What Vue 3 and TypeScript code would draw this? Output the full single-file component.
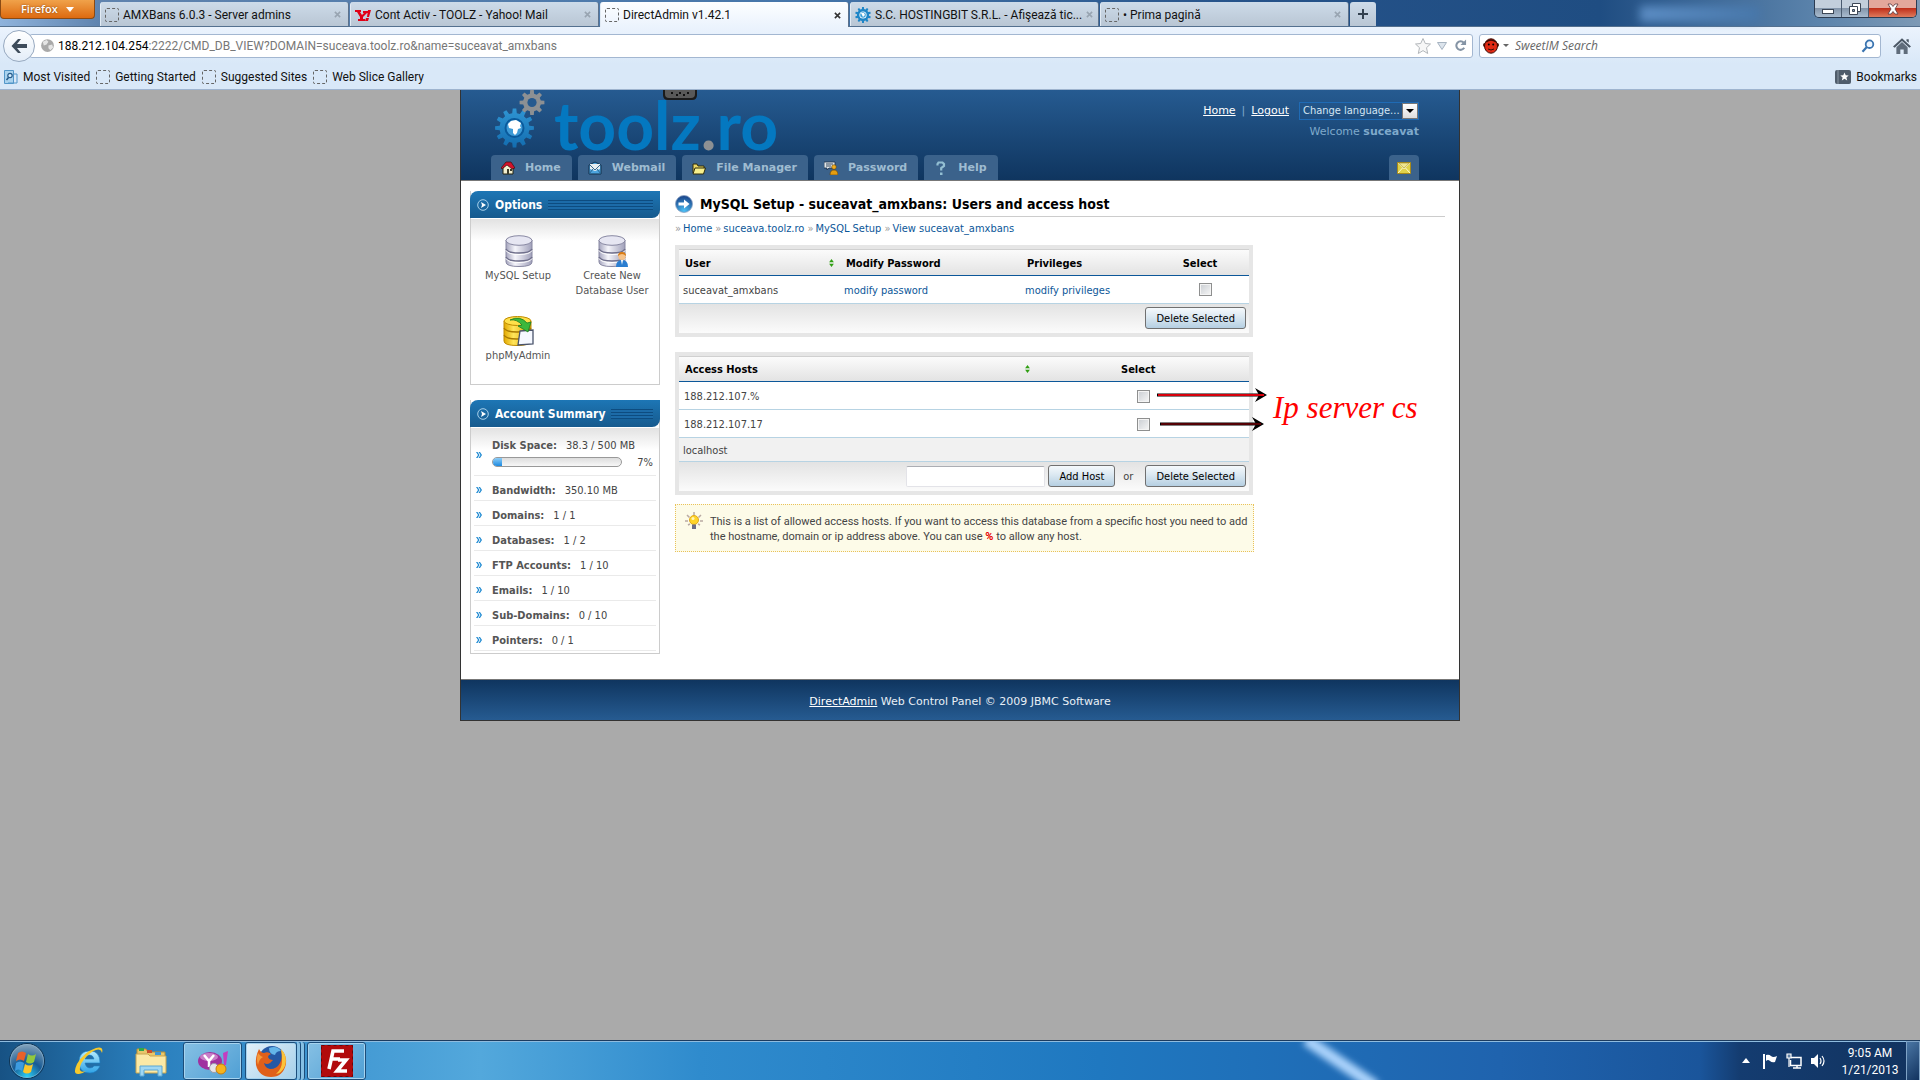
<script setup lang="ts">
import { ref } from 'vue'

interface Tab { title: string; icon: 'blank' | 'yahoo' | 'gear'; active?: boolean }

const tabs: Tab[] = [
  { title: 'AMXBans 6.0.3 - Server admins', icon: 'blank' },
  { title: 'Cont Activ - TOOLZ - Yahoo! Mail', icon: 'yahoo' },
  { title: 'DirectAdmin v1.42.1', icon: 'blank', active: true },
  { title: 'S.C. HOSTINGBIT S.R.L. - Afişează tic...', icon: 'gear' },
  { title: '• Prima pagină', icon: 'blank' },
]
const bookmarks = ['Getting Started', 'Suggested Sites', 'Web Slice Gallery']
const stats = [
  { label: 'Bandwidth:', value: '350.10 MB' },
  { label: 'Domains:', value: '1 / 1' },
  { label: 'Databases:', value: '1 / 2' },
  { label: 'FTP Accounts:', value: '1 / 10' },
  { label: 'Emails:', value: '1 / 10' },
  { label: 'Sub-Domains:', value: '0 / 10' },
  { label: 'Pointers:', value: '0 / 1' },
]
const crumbs = ['Home', 'suceava.toolz.ro', 'MySQL Setup', 'View suceavat_amxbans']
const hosts = ['188.212.107.%', '188.212.107.17']
const diskPercent = 7
const search = ref('')
const newHost = ref('')

function gear(cx: number, cy: number, outer: number, inner: number, teeth: number): string {
  const pts: string[] = []
  const step = (Math.PI * 2) / teeth
  for (let i = 0; i < teeth; i++) {
    const a = i * step - Math.PI / 2
    const corners: [number, number][] = [[-0.3, inner], [-0.18, outer], [0.18, outer], [0.3, inner]]
    for (const [t, r] of corners) {
      pts.push(`${(cx + Math.cos(a + t * step) * r).toFixed(1)} ${(cy + Math.sin(a + t * step) * r).toFixed(1)}`)
    }
  }
  return `M${pts.join('L')}Z`
}
</script>

<template>
  <div class="screen">
    <header class="chrome">
      <div class="titlebar">
        <button class="firefox-btn" type="button">Firefox <span class="tri"></span></button>
        <div class="tabs">
          <div v-for="t in tabs" :key="t.title" class="tab" :class="{ active: t.active }">
            <span v-if="t.icon === 'blank'" class="blank"></span>
            <svg v-else-if="t.icon === 'yahoo'" class="fav" viewBox="0 0 16 16">
              <path d="M0 3h6v2H5l2 3 2-2H8V4h5v2h-1L8 10v2h2v2H3v-2h2v-2L2 5H0z" fill="#e00016" />
              <path d="M13 3h3l-2 7h-2zM11 11h3l-1 3h-3z" fill="#e00016" />
            </svg>
            <svg v-else class="fav" viewBox="0 0 16 16">
              <path :d="gear(8, 8, 8, 6, 10)" fill="#1f86c7" />
              <circle cx="8" cy="8" r="3.6" fill="#fff" /><circle cx="8" cy="8" r="2.8" fill="#3ba0da" />
              <path d="M6 6h3l1 2-2 2z" fill="#fff" />
            </svg>
            <span class="tab-title">{{ t.title }}</span>
            <button class="tab-close" type="button" aria-label="Close tab">
              <svg viewBox="0 0 8 8"><path d="M1 1l6 6M7 1L1 7" stroke="currentColor" stroke-width="1.8" /></svg>
            </button>
          </div>
          <button class="new-tab" type="button" aria-label="New tab">
            <svg viewBox="0 0 12 12"><path d="M6 1v10M1 6h10" stroke="#33414f" stroke-width="2" /></svg>
          </button>
        </div>
        <div class="glow"></div>
        <div class="win-controls">
          <button type="button" aria-label="Minimize"><svg width="14" height="14" viewBox="0 0 14 14"><rect x="1.500" y="7.500" width="11" height="4" fill="#fff" stroke="#3c4756" /></svg></button>
          <button type="button" aria-label="Restore"><svg width="14" height="14" viewBox="0 0 14 14"><path d="M4.500 1.500h8v8h-8z" fill="#fff" stroke="#3c4756" /><path d="M1.500 4.500h8v8h-8z" fill="#fff" stroke="#3c4756" /><path d="M4.500 7.500h2v2h-2z" fill="#8ba0b5" stroke="#3c4756" /></svg></button>
          <button class="close" type="button" aria-label="Close"><svg width="14" height="12" viewBox="0 0 14 12"><path d="M2 1h3l2 2.500L9 1h3L9 6l3 5H9L7 8.500 5 11H2l3-5z" fill="#fff" stroke="#5a3a40" stroke-width=".8" /></svg></button>
        </div>
      </div>

      <div class="navbar">
        <button class="back" type="button" aria-label="Back">
          <svg viewBox="0 0 18 18"><path d="M8 2L1.500 9 8 16h3L7 11h10V7H7l4-5z" fill="#3e4c5b" /></svg>
        </button>
        <div class="urlbar">
          <svg class="globe" viewBox="0 0 16 16"><circle cx="8" cy="8" r="6.800" fill="#a9a9a9" /><path d="M3 4l4-2 2 2-2 3-3 1zM9 8l4-1 1 3-3 3-2-2z" fill="#e5e5e5" /></svg>
          <span class="url"><b>188.212.104.254</b>:2222/CMD_DB_VIEW?DOMAIN=suceava.toolz.ro&amp;name=suceavat_amxbans</span>
          <svg class="star" viewBox="0 0 18 18"><path d="M9 1.500l2.300 5 5.200.5-4 3.700 1.200 5.800L9 13.600l-4.700 2.900 1.200-5.800-4-3.700 5.200-.5z" fill="#f7f7f7" stroke="#b3b7bb" /></svg>
          <svg class="drop" viewBox="0 0 10 10"><path d="M.5 1.500h9L5 8.500z" fill="#dce4ec" stroke="#a6b3c1" /></svg>
          <svg class="reload" viewBox="0 0 14 14"><path d="M11 9.500A4.600 4.600 0 1 1 10.500 4" fill="none" stroke="#8594a5" stroke-width="2.200" /><path d="M13 .5v6H7z" fill="#8594a5" /></svg>
        </div>
        <div class="searchbar">
          <svg class="monkey" viewBox="0 0 16 16"><circle cx="2" cy="7" r="2" fill="#4d1209" /><circle cx="14" cy="7" r="2" fill="#4d1209" /><ellipse cx="8" cy="8" rx="6.500" ry="7.200" fill="#e02a14" stroke="#3b0b05" /><path d="M3 4q5-4 10 0" stroke="#3b0b05" stroke-width="1.500" fill="none" /><circle cx="5.800" cy="6.500" r="1" /><circle cx="10.200" cy="6.500" r="1" /><path d="M5 11q3 2 6 0" stroke="#3b0b05" fill="none" /></svg>
          <span class="caret"></span>
          <input v-model="search" type="text" placeholder="SweetIM Search" aria-label="Search" />
          <svg class="loupe" viewBox="0 0 14 14"><circle cx="8.500" cy="5.200" r="3.800" fill="#eef6ff" stroke="#3a74b0" stroke-width="1.800" /><path d="M5.800 8L1.500 12.800" stroke="#3a74b0" stroke-width="2.200" /></svg>
        </div>
        <button class="home" type="button" aria-label="Home">
          <svg viewBox="0 0 16 16"><path d="M8 1L0 8.500l1.500 1L8 3.500l6.500 6 1.500-1z" fill="#4c5866" /><path d="M3 9.200l5-4.700 5 4.700V15H9.500v-4h-3v4H3z" fill="#5f6c7b" /><path d="M12 2h2v3l-2-1.500z" fill="#4c5866" /></svg>
        </button>
      </div>

      <div class="bookmarks">
        <a href="#"><svg class="visited" viewBox="0 0 14 14"><path d="M.5.5h9v13h-9z" fill="#a9d2ee" stroke="#5396c8" /><path d="M10 4h3v9H4" fill="none" stroke="#5396c8" /><circle cx="6" cy="5.500" r="2.200" fill="#d8efff" stroke="#245a8a" stroke-width="1.200" /><path d="M4.500 7.500L2.500 10" stroke="#245a8a" stroke-width="1.500" /></svg>Most Visited</a>
        <a v-for="b in bookmarks" :key="b" href="#"><span class="blank"></span>{{ b }}</a>
        <button class="bm-menu" type="button"><svg viewBox="0 0 16 14"><rect width="16" height="14" rx="2" fill="#4f5c6b" /><path d="M3 0v14" stroke="#8b97a5" /><path d="M9.500 2.500l1.200 2.800 3 .2-2.300 2 .8 3-2.700-1.700L6.800 10.500l.8-3-2.300-2 3-.2z" fill="#fff" /></svg>Bookmarks</button>
      </div>
    </header>

    <main class="viewport">
      <div class="panel">
        <div class="da-head">
          <div class="brand-row">
            <div class="brand">
              <svg class="gears" viewBox="0 0 50 58">
                <defs><linearGradient id="gb" x1="0" y1="0" x2="0" y2="1"><stop offset="0" stop-color="#2f95d3" /><stop offset="1" stop-color="#136db0" /></linearGradient></defs>
                <path :d="gear(19.500, 38, 19.500, 15, 12)" fill="url(#gb)" />
                <circle cx="19.500" cy="38" r="10" fill="#0a5a9c" /><circle cx="19.500" cy="38" r="8" fill="#3d9ad6" />
                <path d="M13 34l3-3 5-1 5 3-1 3 1 2-3 1-1 4-2 2-2-2v-4l-4-1z" fill="#fff" />
                <path :d="gear(37, 12.500, 12.500, 9, 8)" fill="#8d9093" /><circle cx="37" cy="12.500" r="4.600" fill="#265a8f" />
              </svg>
              <span class="wordmark">toolz<i>.</i>ro</span>
            </div>
            <svg class="handle" viewBox="0 0 34 10"><path d="M0 0h34v5q0 5-5 5H5Q0 10 0 5z" fill="#1b1b1b" /><path d="M2 0h30v4q0 4-4 4H6Q2 8 2 4z" fill="#595959" /><path d="M8 3h2M13 5h2M16 3h2M20 5h2M24 3h2" stroke="#111" stroke-width="2" /></svg>
            <div class="user-box">
              <div class="user-links">
                <a href="#">Home</a><span>|</span><a href="#">Logout</a>
                <div class="lang"><select aria-label="Language"><option>Change language...</option></select><span class="lang-arrow"></span></div>
              </div>
              <div class="welcome">Welcome <b>suceavat</b></div>
            </div>
          </div>
          <nav class="da-nav">
            <a href="#"><svg viewBox="0 0 14 14"><path d="M2 7l4-4 6 4v6H2z" fill="#f3efcf" stroke="#221" /><path d="M0 7l5-6h5l4 6-3 1-5-4-5 4z" fill="#d3122a" stroke="#311" stroke-width=".7" /><path d="M6 8h2v5H6zM9 8h2v2H9z" fill="#3b3b2a" /></svg>Home</a>
            <a href="#"><svg viewBox="0 0 14 14"><path d="M1 4l6-3 6 3v9H1z" fill="#4da5df" stroke="#12304d" /><path d="M2 3h10v5L7 10 2 8z" fill="#e9eef0" /><path d="M2 4l5 5 5-5M1 13l4-5M13 13L9 8" fill="none" stroke="#245b86" stroke-width=".9" /></svg>Webmail</a>
            <a href="#"><svg viewBox="0 0 14 14"><path d="M1 12V3h4l1 2h6v3" fill="#ead765" stroke="#302c0a" /><path d="M1 13l2-6h10.500l-2 6z" fill="#f7ef8c" stroke="#302c0a" /></svg>File Manager</a>
            <a href="#"><svg viewBox="0 0 14 14"><path d="M0 1h11v6H5L3 9V7H0z" fill="#e3e8ea" stroke="#1d3049" stroke-width=".8" /><path d="M2 3h7M2 5h5" stroke="#34495e" /><circle cx="10" cy="6" r="2.300" fill="#f2ae1c" stroke="#67430a" stroke-width=".6" /><path d="M6 14q0-5 4-5t4 5z" fill="#e59d10" stroke="#67430a" stroke-width=".6" /></svg>Password</a>
            <a href="#"><svg viewBox="0 0 14 14"><path d="M3.500 4.500V3l1-1.500h4L10 3v2L7.200 7v2.500" fill="none" stroke="#93bfd3" stroke-width="2.200" /><path d="M6 11.500h2.500V14H6z" fill="#93bfd3" /></svg>Help</a>
            <a class="mail" href="#" aria-label="Messages"><svg viewBox="0 0 14 14"><path d="M.5 1.500h13v11H.5z" fill="#e0d24b" stroke="#a98a18" /><path d="M1 2l6 6 6-6M1 12l4.500-5M13 12L8.500 7" fill="none" stroke="#fffbd0" /><path d="M1.500 2h11L7 7.300z" fill="#efe690" stroke="#9b842a" stroke-width=".6" /></svg></a>
          </nav>
        </div>

        <div class="da-body">
          <aside class="side">
            <section class="box options">
              <h2><svg viewBox="0 0 12 12"><circle cx="6" cy="6" r="5.300" fill="none" stroke="#a8d0ea" /><path d="M4 3l5 3-5 3 1-3z" fill="#fff" /></svg>Options<span class="ribs"></span></h2>
              <div class="icons">
                <a href="#">
                  <svg viewBox="0 0 32 32">
                    <defs><linearGradient id="db" x1="0" x2="1"><stop offset="0" stop-color="#a5a5be" /><stop offset=".35" stop-color="#f5f5fb" /><stop offset="1" stop-color="#a0a0ba" /></linearGradient></defs>
                    <path d="M4 5v22q0 4.500 13 4.500T30 27V5z" fill="url(#db)" stroke="#8888a2" /><ellipse cx="17" cy="5.500" rx="13" ry="4.800" fill="#e6e6f2" stroke="#8888a2" />
                    <path d="M4 14q2 4 13 4t13-4M4 22q2 4 13 4t13-4" fill="none" stroke="#6f6f8b" stroke-width="1.500" /><path d="M4 15.500q2 4 13 4t13-4M4 23.500q2 4 13 4t13-4" fill="none" stroke="#fff" />
                  </svg>MySQL Setup</a>
                <a href="#">
                  <svg viewBox="0 0 32 32">
                    <path d="M3 5v22q0 4.500 13 4.500T29 27V5z" fill="url(#db)" stroke="#8888a2" /><ellipse cx="16" cy="5.500" rx="13" ry="4.800" fill="#e6e6f2" stroke="#8888a2" />
                    <path d="M3 14q2 4 13 4t13-4M3 22q2 4 13 4t13-4" fill="none" stroke="#6f6f8b" stroke-width="1.500" /><path d="M3 15.500q2 4 13 4t13-4M3 23.500q2 4 13 4t13-4" fill="none" stroke="#fff" />
                    <path d="M20 32q0-7 6-7t6 7z" fill="#2b7ed0" /><path d="M25 25h2l-1 5z" fill="#fff" /><circle cx="26" cy="21.500" r="3.600" fill="#f6c38a" /><path d="M22 21q0-4 4-4t4 4q-2-2-4-2t-4 2z" fill="#d97b12" />
                  </svg>Create New Database User</a>
                <a href="#">
                  <svg viewBox="0 0 32 32">
                    <defs><linearGradient id="dy" x1="0" x2="1"><stop offset="0" stop-color="#e2a800" /><stop offset=".35" stop-color="#ffe55a" /><stop offset="1" stop-color="#e0a200" /></linearGradient></defs>
                    <path d="M2 6v20q0 4.500 13 4.500T29 26V6z" fill="url(#dy)" stroke="#bf8b00" /><ellipse cx="15.500" cy="6" rx="13.500" ry="4.500" fill="#ffe04a" stroke="#bf8b00" />
                    <path d="M2 13q2 4 13 4t14-4M2 20q2 4 13 4t14-4" fill="none" stroke="#a87900" stroke-width="1.400" />
                    <path d="M18 16l13-1v14l-15 1z" fill="#f5f8ff" stroke="#49536b" stroke-width="1.300" /><path d="M8 5Q18 0 25 8l4-1-3 10-10-6 4-1Q15 4 8 5z" fill="#3cb83c" stroke="#1c7c22" stroke-width=".8" />
                  </svg>phpMyAdmin</a>
              </div>
            </section>
            <section class="box summary">
              <h2><svg viewBox="0 0 12 12"><circle cx="6" cy="6" r="5.300" fill="none" stroke="#a8d0ea" /><path d="M4 3l5 3-5 3 1-3z" fill="#fff" /></svg>Account Summary<span class="ribs"></span></h2>
              <ul>
                <li class="disk">
                  <svg class="bul" viewBox="0 0 6 6"><path d="M0 0h1.500l2 3-2 3H0l2-3zM2.500 0H4l2 3-2 3H2.500l2-3z" fill="#1f8ad2" /></svg>
                  <div class="disk-info">
                    <div><b>Disk Space:</b>38.3 / 500 MB</div>
                    <div class="meter"><div class="bar"><div class="fill" :style="{ width: diskPercent + '%' }"></div></div><span>{{ diskPercent }}%</span></div>
                  </div>
                </li>
                <li v-for="s in stats" :key="s.label">
                  <svg class="bul" viewBox="0 0 6 6"><path d="M0 0h1.500l2 3-2 3H0l2-3zM2.500 0H4l2 3-2 3H2.500l2-3z" fill="#1f8ad2" /></svg>
                  <span><b>{{ s.label }}</b>{{ s.value }}</span>
                </li>
              </ul>
            </section>
          </aside>

          <section class="content">
            <h1><svg viewBox="0 0 18 18"><defs><radialGradient id="ra" cx=".5" cy=".9" r=".9"><stop offset="0" stop-color="#4cc0f5" /><stop offset="1" stop-color="#173f86" /></radialGradient></defs><circle cx="9" cy="9" r="8.500" fill="url(#ra)" stroke="#8ea4c4" stroke-width=".8" /><path d="M3.500 7.500H9V4.500L14.500 9 9 13.500v-3H3.500z" fill="#fff" /></svg>MySQL Setup - suceavat_amxbans: Users and access host</h1>
            <div class="crumbs"><span v-for="c in crumbs" :key="c"><i>»</i><a href="#">{{ c }}</a></span></div>

            <table class="grid users">
              <colgroup><col class="c-user" /><col class="c-mod" /><col class="c-priv" /><col /></colgroup>
              <thead><tr>
                <th><div class="sortable">User<svg viewBox="0 0 6 10"><path d="M0 4l3-4 3 4zM0 6l3 4 3-4z" fill="#2f9e12" /></svg></div></th>
                <th>Modify Password</th><th>Privileges</th><th class="sel">Select</th>
              </tr></thead>
              <tbody><tr>
                <td>suceavat_amxbans</td><td><a href="#">modify password</a></td><td><a href="#">modify privileges</a></td>
                <td class="chk"><input type="checkbox" aria-label="Select suceavat_amxbans" /></td>
              </tr></tbody>
              <tfoot><tr><td colspan="4"><div class="actions"><button type="button">Delete Selected</button></div></td></tr></tfoot>
            </table>

            <div class="hosts-wrap">
              <table class="grid hosts">
                <colgroup><col class="c-host" /><col /></colgroup>
                <thead><tr>
                  <th><div class="sortable">Access Hosts<svg viewBox="0 0 6 10"><path d="M0 4l3-4 3 4zM0 6l3 4 3-4z" fill="#2f9e12" /></svg></div></th>
                  <th class="sel">Select</th>
                </tr></thead>
                <tbody>
                  <tr v-for="h in hosts" :key="h"><td>{{ h }}</td><td class="chk"><input type="checkbox" :aria-label="'Select ' + h" /></td></tr>
                  <tr class="local"><td colspan="2">localhost</td></tr>
                </tbody>
                <tfoot><tr><td colspan="2"><div class="actions">
                  <input v-model="newHost" type="text" aria-label="New host" /><button type="button">Add Host</button><span>or</span><button type="button">Delete Selected</button>
                </div></td></tr></tfoot>
              </table>
              <svg class="arrows" viewBox="0 0 112 44">
                <path d="M0 7h106" stroke="#000" stroke-width="3" /><path d="M98 0l12 7-12 7 4-7z" fill="#000" /><path d="M1 7h106" stroke="#d8000c" stroke-width="2" />
                <path d="M3 36h100" stroke="#000" stroke-width="3" /><path d="M95 29l12 7-12 7 4-7z" fill="#000" /><path d="M4 36h100" stroke="#a80009" stroke-width="1" />
              </svg>
              <div class="annotation">Ip server cs</div>
            </div>

            <div class="note">
              <svg viewBox="0 0 18 18"><path d="M9 0v3M2 3l2.500 2.500M16 3l-2.500 2.500M0 9h3M15 9h3M3 13l2-1M15 13l-2-1" stroke="#b9aaa3" stroke-width="1.500" /><circle cx="9" cy="8" r="4.500" fill="#ffd429" stroke="#e0a91c" /><circle cx="8" cy="6.500" r="1.500" fill="#fff6b8" /><path d="M7 12.500h4V17H7z" fill="#6b6c86" /></svg>
              <p>This is a list of allowed access hosts. If you want to access this database from a specific host you need to add<br />the hostname, domain or ip address above. You can use <b>%</b> to allow any host.</p>
            </div>
          </section>
        </div>

        <footer class="da-foot"><a href="#">DirectAdmin</a> Web Control Panel © 2009 JBMC Software</footer>
      </div>
    </main>

    <footer class="taskbar">
      <div class="streak"></div>
      <button class="orb" type="button" aria-label="Start">
        <svg viewBox="0 0 38 38"><defs><radialGradient id="ob" cx=".5" cy=".95" r=".9"><stop offset="0" stop-color="#29d0f7" /><stop offset=".5" stop-color="#175a94" /><stop offset="1" stop-color="#7f9fb9" /></radialGradient></defs><circle cx="19" cy="19" r="17.500" fill="url(#ob)" stroke="#0e3353" /><circle cx="19" cy="19" r="16.500" fill="none" stroke="#8db8d3" stroke-opacity=".6" />
          <path d="M10 11q4-3 8 0l-2 8q-4-3-8 0z" fill="#e8612a" /><path d="M20 12q4 3 8 0l-2 8q-4 3-8 0z" fill="#92c83e" /><path d="M8 21q4-3 8 0l-2 8q-4-3-7 0z" fill="#3d9be0" /><path d="M17 22q4 3 8 0l-2 8q-4 3-8 0z" fill="#fbc52b" /></svg>
      </button>
      <button class="pin" type="button" aria-label="Internet Explorer">
        <svg viewBox="0 0 32 32"><defs><linearGradient id="ie" x1="0" y1="0" x2="0" y2="1"><stop offset="0" stop-color="#b6ecff" /><stop offset="1" stop-color="#2ea2e6" /></linearGradient></defs><path d="M27 18H12q1 5 5 5 3 0 4-2h6q-3 7-10 7-11 0-11-11T17 6q10 0 10 12zM12 14h9q-1-4-4.500-4T12 14z" fill="url(#ie)" stroke="#1c7fc4" stroke-width=".6" /><path d="M29 8Q31 1 23 3 11 7 4 19q-5 11 2 10 3 0 7-3-5 2-6-1Q6 19 14 11q9-8 13-6 1 0 2 3z" fill="#f7c92c" /></svg>
      </button>
      <button class="pin" type="button" aria-label="Windows Explorer">
        <svg viewBox="0 0 32 32"><path d="M2 4h9l2 3h17v20H2z" fill="#e9c76a" stroke="#b48f35" /><path d="M4 3h5v3H4z" fill="#2ea84a" /><path d="M12 5h5v3h-5z" fill="#c94d2b" /><path d="M20 7h6v3h-6z" fill="#3d95d6" /><path d="M1 9h12l2 2h16v17H1z" fill="#fbe9a6" stroke="#c7a550" /><path d="M5 31V21h22v10h-4v-6H9v6z" fill="#9fd7f3" stroke="#5aa7d4" /></svg>
      </button>
      <button class="task yahoo" type="button" aria-label="Yahoo! Messenger">
        <svg viewBox="0 0 32 32"><ellipse cx="13" cy="16" rx="12" ry="9" fill="#a0319f" /><ellipse cx="12" cy="12" rx="9" ry="4" fill="#d9a0d8" opacity=".7" /><path d="M7 10l5 6 5-6M12 16v6" stroke="#fff" stroke-width="2.500" fill="none" /><path d="M26 8l5-2-2 14h-2z" fill="#c43cc0" /><circle cx="17" cy="23" r="4.500" fill="#e4e4ea" stroke="#9a9aa6" /><circle cx="24" cy="24" r="5" fill="#f6b31d" stroke="#c77d0c" /></svg>
      </button>
      <button class="task fx" type="button" aria-label="Firefox">
        <svg viewBox="0 0 32 32"><circle cx="17" cy="14" r="13" fill="#2458a4" /><path d="M14 3q8-3 12 3-5 0-6 4-6-1-6-7z" fill="#64b5e8" /><path d="M4 4q-4 8-3 16 3 12 15 12t15-13q1-9-5-14 2 8-1 13-3 6-10 6-5-1-6-6 3 2 6 0l3-3q-4 0-5-3 0-2 3-3-3-3-7-1Q6 8 4 4z" fill="#e0601a" /><path d="M26 4q7 7 4 17-3 7-9 8 6-5 6-13 0-7-1-12z" fill="#fbc33a" /><path d="M3 8q-2 6 0 12 1-6 5-8-3-1-5-4z" fill="#f49a3c" /></svg>
      </button>
      <span class="stack"></span><span class="stack"></span>
      <button class="task" type="button" aria-label="FileZilla">
        <svg viewBox="0 0 32 32"><rect width="32" height="32" fill="#b10a0c" /><rect x=".5" y=".5" width="31" height="31" fill="none" stroke="#6d0406" stroke-dasharray="3 3" /><path d="M8 24l4-18h11M10 14h9M17 15h8l-9 11h10" fill="none" stroke="#fff" stroke-width="3.600" /></svg>
      </button>
      <div class="tray">
        <svg class="up" viewBox="0 0 8 5"><path d="M0 5l4-5 4 5z" fill="#fff" /></svg>
        <svg viewBox="0 0 16 16"><path d="M2 1v15" stroke="#fff" stroke-width="2" /><path d="M4 2q3-1 5 1t6 0l-2 6q-3 1-5-1T4 8z" fill="#fff" /></svg>
        <svg viewBox="0 0 16 16"><path d="M5 4.500h10v8H4.500V7M7 15h8M11 12v3" fill="none" stroke="#fff" stroke-width="1.500" /><path d="M1 1h4v4H1zM3 5v9" fill="#5f7fa3" stroke="#fff" stroke-width="1.200" /></svg>
        <svg viewBox="0 0 16 16"><path d="M1 5h3l4-4v14l-4-4H1z" fill="#fff" /><path d="M10 5q2 3 0 6M12 3q4 5 0 10" fill="none" stroke="#fff" stroke-width="1.200" /></svg>
      </div>
      <div class="clock"><span>9:05 AM</span><span>1/21/2013</span></div>
      <button class="show-desktop" type="button" aria-label="Show desktop"></button>
    </footer>
  </div>
</template>

<style>
body { margin: 0; background: #aaa; }
</style>

<style scoped>
* { box-sizing: border-box; }
button { font: inherit; padding: 0; border: 0; background: none; color: inherit; }
svg { display: block; flex: none; }
.screen { display: flex; flex-direction: column; min-height: 100vh; font: 11px/15px "DejaVu Sans Condensed", "DejaVu Sans", sans-serif; color: #444; }

/* browser chrome */
.chrome { font: 12px/16px Roboto, sans-serif; color: #111; background: #d9e8f8; border-bottom: 1px solid #9fb4cf; }
.titlebar { position: relative; display: flex; height: 27px; background: linear-gradient(90deg, #8fb3dc 0, #5f83ae 100px, #4676aa 800px, #255289 1250px, #1f4d82 1600px, #5c84ac 1820px, #7d99b5 100%); border-bottom: 1px solid #54708f; }
.firefox-btn { display: flex; align-items: center; gap: 8px; width: 95px; height: 19px; padding-left: 20px; border: 1px solid #8a4a14; border-top: 0; border-radius: 0 0 4px 4px; background: linear-gradient(#f0a24a, #dd6a10); color: #fff; font: 600 11px/14px "Open Sans", sans-serif; text-shadow: 0 0 2px #7a3b00; }
.tri { border: 4px solid transparent; border-top: 5px solid #fff; border-bottom: 0; }
.tabs { display: flex; gap: 1px; padding-top: 2px; margin-left: 5px; }
.tab { display: flex; align-items: center; gap: 4px; width: 249px; height: 24px; padding: 1px 7px 0 4px; border-right: 1px solid #5d728c; border-left: 1px solid #e2ebf4; border-radius: 3px 3px 0 0; background: linear-gradient(#cddbe9, #b9c6d4); }
.tab.active { height: 25px; background: linear-gradient(#fdfeff, #ebf3fd); }
.tab-title { flex: 1; white-space: nowrap; }
.tab-close { color: #98a4b1; }
.tab-close svg { width: 7px; height: 7px; }
.tab.active .tab-close { color: #333; }
.blank { flex: none; width: 14px; height: 14px; border: 1px dashed #666; border-radius: 2px; }
.fav { width: 16px; height: 16px; }
.new-tab { display: flex; align-items: center; justify-content: center; width: 26px; height: 24px; background: linear-gradient(#cddbe9, #b9c6d4); border-radius: 3px 3px 0 0; }
.new-tab svg { width: 12px; height: 12px; }
.glow { width: 120px; height: 16px; margin: 6px 0 0 auto; background: linear-gradient(90deg, #72a5de, #4678ae); filter: blur(5px); opacity: .7; }
.win-controls { display: flex; height: 18px; margin: 0 3px 0 54px; border: 1px solid #2c3c52; border-top: 0; border-radius: 0 0 5px 5px; overflow: hidden; }
.win-controls button { display: flex; align-items: center; justify-content: center; width: 27px; border-right: 1px solid #4a5b70; background: linear-gradient(#c3cfdc 45%, #8496ab 50%, #a9bccf); }
.win-controls .close { width: 47px; border: 0; background: linear-gradient(#e3a79b 45%, #c0301b 50%, #de7a5c); }
.navbar { display: flex; align-items: center; height: 37px; padding: 0 9px 0 3px; background: linear-gradient(#ebf3fd, #d9e8f8); }
.back { position: relative; z-index: 1; display: flex; align-items: center; justify-content: center; flex: none; width: 32px; height: 32px; border: 1px solid #97a9c0; border-radius: 50%; background: linear-gradient(#fff, #e3edf8); }
.back svg { width: 18px; height: 18px; }
.urlbar, .searchbar { display: flex; align-items: center; height: 24px; border: 1px solid #a3b7d1; border-radius: 3px; background: #fff; }
.urlbar { flex: 1; margin-left: -6px; padding: 0 5px 0 10px; }
.globe { width: 15px; height: 15px; }
.url { flex: 1; margin-left: 3px; color: #777; white-space: nowrap; }
.url b { font-weight: 400; color: #000; }
.star { width: 18px; height: 18px; }
.drop { width: 10px; height: 10px; margin-left: 5px; }
.reload { width: 13px; height: 13px; margin-left: 7px; }
.searchbar { width: 402px; margin-left: 6px; padding: 0 5px 0 3px; }
.monkey { width: 16px; height: 16px; }
.caret { margin-left: 4px; border: 3px solid transparent; border-top-color: #666; border-bottom: 0; }
.searchbar input { flex: 1; min-width: 0; margin-left: 6px; padding: 0; border: 0; outline: 0; background: none; font: italic 12px/16px "Open Sans", sans-serif; }
.searchbar input::placeholder { color: #666; opacity: 1; }
.loupe { width: 14px; height: 14px; }
.home { margin-left: 12px; }
.home svg { width: 18px; height: 18px; }
.bookmarks { display: flex; align-items: center; gap: 6px; height: 25px; padding: 0 3px 0 4px; }
.bookmarks a, .bm-menu { display: flex; align-items: center; gap: 5px; color: #111; text-decoration: none; white-space: nowrap; }
.visited { width: 14px; height: 14px; }
.bm-menu { margin-left: auto; }
.bm-menu svg { width: 16px; height: 14px; }

/* page */
.viewport { flex: 1; background: #aaa; }
.panel { width: 1000px; margin: 0 auto; border: 1px solid #333; border-top: 0; background: #fff; }
.da-head { display: flex; flex-direction: column; justify-content: space-between; height: 91px; padding: 0 40px 0 30px; background: linear-gradient(#265b91, #0f355f); border-bottom: 1px solid #777; }
.brand-row { position: relative; display: flex; justify-content: space-between; height: 65px; }
.brand { display: flex; padding-left: 4px; }
.gears { width: 50px; height: 58px; }
.wordmark { margin-left: 9px; font: 700 66px/70px Lato, sans-serif; color: #0478c0; }
.wordmark i { font-style: normal; color: #8d9093; }
.handle { position: absolute; left: 172px; top: 0; width: 34px; height: 10px; }
.user-box { padding-top: 12px; text-align: right; font: 11px/16px "DejaVu Sans", sans-serif; color: #7fa9cb; }
.user-links { display: flex; align-items: center; justify-content: flex-end; height: 18px; gap: 6px; }
.user-links a { color: #fff; }
.lang { position: relative; margin-left: 4px; }
.lang select { display: block; appearance: none; width: 120px; height: 18px; padding: 0 0 0 3px; border: 1px solid #1f6bb5; border-radius: 0; background: transparent; color: #d5e6f3; font: 11px/14px "DejaVu Sans Condensed", sans-serif; }
.lang-arrow { position: absolute; right: 1px; top: 1px; display: flex; align-items: center; justify-content: center; width: 16px; height: 16px; border: 1px solid #777; background: linear-gradient(#fff, #ddd); pointer-events: none; }
.lang-arrow::after { content: ""; border: 4px solid transparent; border-top-color: #000; border-bottom: 0; }
.welcome { margin-top: 4px; }
.da-nav { display: flex; gap: 6px; height: 25px; font: bold 11px/16px "DejaVu Sans", sans-serif; }
.da-nav a { display: flex; align-items: center; gap: 10px; padding: 1px 11px 0 10px; border-radius: 4px 4px 0 0; background: #3b628b; color: #9fbcd1; text-decoration: none; }
.da-nav svg { width: 14px; height: 14px; }
.da-nav .mail { margin-left: auto; padding: 0 8px; }
.da-body { display: flex; gap: 15px; min-height: 498px; padding: 10px 14px 0 9px; }
.side { flex: none; width: 190px; }
.box { margin-bottom: 15px; border: 1px solid #ccc; border-top: 0; }
.box h2 { display: flex; align-items: center; gap: 6px; height: 27px; margin: 0 -1px 1px; padding: 0 7px; border-radius: 8px 0 8px 0; background: linear-gradient(#1d76b5, #165a8e); color: #fff; font-size: 12px; line-height: 16px; }
.box h2 svg { width: 12px; height: 12px; }
.ribs { flex: 1; height: 10px; background: repeating-linear-gradient(#0d4c80 0, #0d4c80 1px, #1c6ba8 1px, #1c6ba8 3px); }
.icons { display: flex; flex-wrap: wrap; align-content: flex-start; height: 165px; padding-top: 16px; background: linear-gradient(#e2e2e2, #fff 22px); }
.icons a { display: flex; flex-direction: column; align-items: center; width: 50%; height: 80px; padding: 0 8px; color: #555; text-align: center; text-decoration: none; }
.icons svg { width: 32px; height: 32px; margin-bottom: 1px; }
.summary ul { margin: 0; padding: 0 3px 2px; list-style: none; background: linear-gradient(#e2e2e2, #fff 22px); }
.summary li { display: flex; align-items: center; height: 25px; padding: 4px 3px 0 2px; border-bottom: 1px solid #eaeaea; color: #444; }
.summary li.disk { height: 48px; padding-top: 6px; }
.summary b { margin-right: 9px; color: #555; }
.bul { width: 6px; height: 6px; margin-right: 10px; }
.disk-info { flex: 1; }
.meter { display: flex; align-items: center; justify-content: space-between; height: 19px; }
.bar { width: 130px; height: 10px; border: 1px solid #999; border-radius: 5px; background: linear-gradient(#ddd, #f7f7f7); overflow: hidden; }
.fill { height: 100%; background: linear-gradient(#8ccdf8, #1e8ae0); }

.content { flex: 1; min-width: 0; }
h1 { display: flex; align-items: center; gap: 7px; height: 26px; margin: 0; border-bottom: 1px solid #ccc; color: #000; font-size: 14px; line-height: 18px; }
h1 svg { width: 18px; height: 18px; }
.crumbs { display: flex; height: 28px; padding-top: 4px; }
.crumbs span { margin-right: 3px; }
.crumbs i { margin-right: 2px; font-style: normal; color: #999; }
.crumbs a, .grid a { color: #0c5799; text-decoration: none; }
.grid { width: 578px; border: 4px solid #e6e6e6; border-spacing: 0; table-layout: fixed; background: #fff; }
.c-user { width: 161px; } .c-mod { width: 181px; } .c-priv { width: 140px; } .c-host { width: 357px; }
.grid th { height: 27px; padding: 0 6px; text-align: left; color: #000; border-top: 1px solid #d0d0d0; border-bottom: 1px solid #0c5799; background: linear-gradient(#fbfbfb, #e3e3e3); }
.grid td { height: 28px; padding: 1px 4px 0; border-bottom: 1px solid #b7d3e3; }
.users th { padding-top: 1px; }
.hosts th { height: 26px; }
.hosts tbody td { padding-left: 5px; }
.sortable { display: flex; align-items: center; justify-content: space-between; }
.sortable svg { width: 5px; height: 8px; }
.users .sel { padding: 1px 10px 0 0; text-align: center; }
.users .chk { padding: 0; text-align: center; }
.hosts .sel { padding-left: 85px; }
.hosts tbody .chk { padding-left: 101px; }
.grid input[type="checkbox"] { appearance: none; display: block; width: 13px; height: 13px; margin: 0; border: 1px solid #8e8f8f; outline: 1px solid #f4f4f4; outline-offset: -2px; background: linear-gradient(135deg, #c9cdd2, #f7f7f7); }
.users input[type="checkbox"] { margin: 0 auto; }
.grid .local td { height: 24px; padding-left: 4px; background: #f1f1f1; }
.grid tfoot td { height: 29px; padding: 3px 3px 0; border: 0; background: linear-gradient(#e3e3e3, #fbfbfb); vertical-align: top; }
.actions { display: flex; align-items: center; justify-content: flex-end; height: 22px; }
.actions button { height: 22px; padding: 0 10px; border: 1px solid #707070; border-radius: 3px; background: linear-gradient(#f5f9fc, #dbe8f1 45%, #b5cfe2); color: #000; white-space: nowrap; }
.actions input { width: 139px; height: 21px; margin-right: 3px; padding: 0 3px; border: 1px solid #e3e3e8; border-top-color: #abadb3; border-radius: 2px; background: #fff; }
.actions span { margin: 0 12px 0 8px; }
.hosts-wrap { position: relative; width: 578px; margin-top: 15px; }
.arrows { position: absolute; left: 482px; top: 36px; width: 112px; height: 44px; }
.annotation { position: absolute; left: 598px; top: 38px; white-space: nowrap; font: italic 31px/36px "Liberation Serif", serif; color: #f00; }
.note { display: flex; gap: 7px; width: 579px; height: 48px; margin-top: 9px; padding: 7px 0 0 9px; border: 1px dotted #e9c25a; background: #fdfbe8; }
.note svg { width: 18px; height: 18px; }
.note p { margin: 2px 0 0; white-space: nowrap; font: 11px/15px Roboto, sans-serif; }
.note b { color: #e60000; }
.da-foot { display: flex; align-items: center; justify-content: center; height: 41px; padding-top: 3px; border-top: 1px solid #777; background: linear-gradient(#0f355f, #265b91); color: #e8eff6; font: 11px/16px "DejaVu Sans", sans-serif; white-space: pre; }
.da-foot a { color: #fff; }

/* taskbar */
.taskbar { position: relative; display: flex; align-items: center; height: 40px; overflow: hidden; border-top: 1px solid #1c3c60; box-shadow: inset 0 1px #8fbcdf; background: linear-gradient(90deg, #175284 0, #2a7fbd 150px, #3d94d0 300px, #53a8dc 480px, #2f8bcd 700px, #1f78c0 1100px, #1f63ae 1500px, #1a559b 1700px, #143c70 1740px, #12335f 100%); color: #fff; font: 12px/17px Roboto, sans-serif; }
.streak { position: absolute; left: 1335px; top: -20px; width: 12px; height: 84px; background: #a9d2fb; filter: blur(3px); transform: rotate(-56deg); }
.orb { margin-left: 8px; }
.orb svg { width: 38px; height: 38px; }
.pin { width: 62px; display: flex; justify-content: center; }
.orb + .pin { margin-left: 12px; }
.pin svg, .task svg { width: 32px; height: 32px; }
.task { display: flex; align-items: center; justify-content: center; width: 59px; height: 38px; border: 1px solid #1c4d7a; border-radius: 3px; box-shadow: inset 0 0 0 1px #a5d3ef; background: linear-gradient(135deg, #86c0e4, #4f9fd4); }
.task.yahoo { margin: 0 3px 0 1px; }
.task.fx { width: 52px; background: linear-gradient(135deg, #e3f1fa, #a5cfe9); }
.stack { width: 4px; height: 38px; border-right: 1px solid #1c4d7a; background: #86c0e4; border-radius: 0 3px 3px 0; }
.stack + .task { margin-left: 2px; }
.tray { display: flex; align-items: center; gap: 8px; margin-left: auto; }
.tray svg { width: 16px; height: 16px; }
.tray .up { width: 8px; height: 5px; margin-right: 4px; }
.clock { display: flex; flex-direction: column; align-items: center; width: 72px; margin-left: 8px; padding-top: 2px; }
.show-desktop { width: 14px; height: 40px; border: 1px solid #7fa3c6; background: linear-gradient(135deg, #4a76a4, #12335f); }
</style>
